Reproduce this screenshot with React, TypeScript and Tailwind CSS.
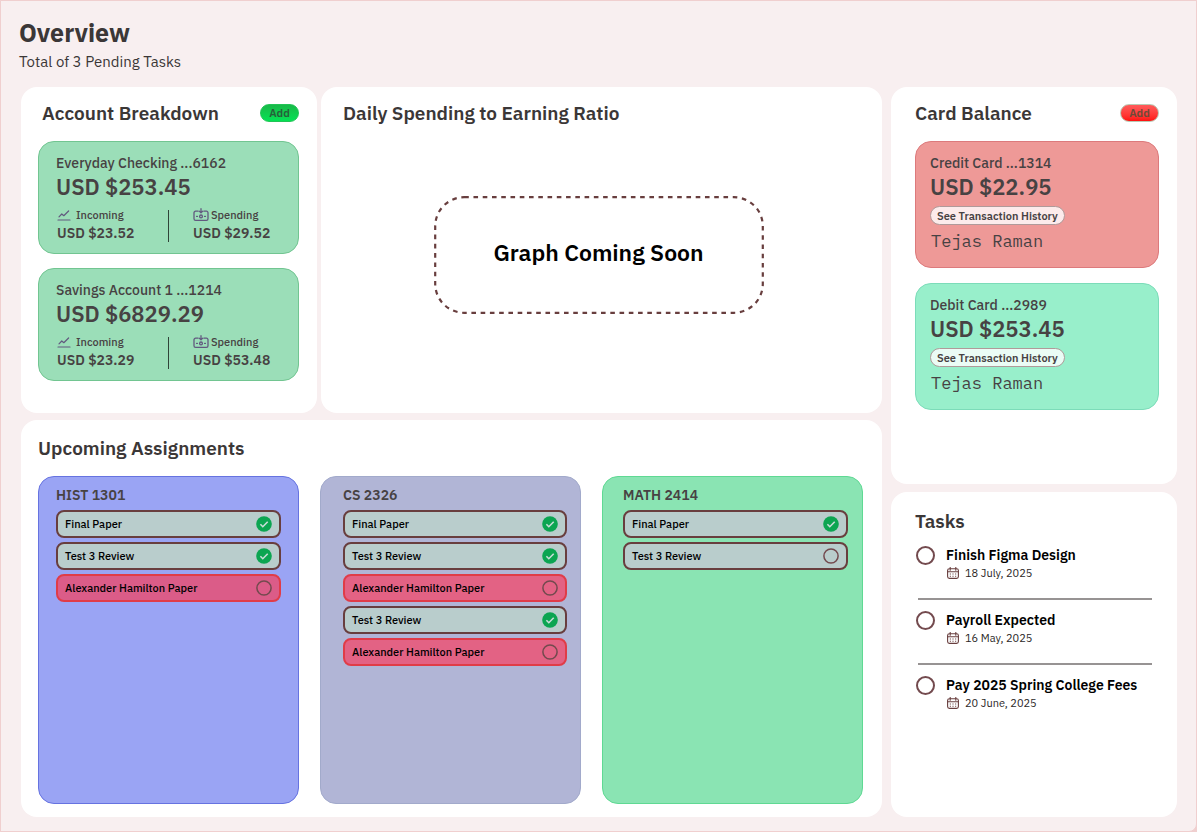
type Account = { name: string; amount: string; incoming: string; spending: string };
type Card = { id: string; name: string; amount: string; owner: string; style: string; pill: string };
type Assignment = { title: string; done?: boolean; late?: boolean };
type Course = { name: string; style: string; pad: string; lateStyle: string; items: Assignment[] };

const accounts: Account[] = [
  { name: "Everyday Checking ...6162", amount: "USD $253.45", incoming: "USD $23.52", spending: "USD $29.52" },
  { name: "Savings Account 1 ...1214", amount: "USD $6829.29", incoming: "USD $23.29", spending: "USD $53.48" },
];

const cards: Card[] = [
  {
    id: "credit",
    name: "Credit Card ...1314",
    amount: "USD $22.95",
    owner: "Tejas Raman",
    style: "border-[#dc7a7c] bg-[#ee9997]",
    pill: "bg-[#fcebeb]",
  },
  {
    id: "debit",
    name: "Debit Card ...2989",
    amount: "USD $253.45",
    owner: "Tejas Raman",
    style: "border-[#7cdcb9] bg-[#98efcb]",
    pill: "bg-[#ebfcf5]",
  },
];

const courses: Course[] = [
  {
    name: "HIST 1301",
    style: "border-[#6673e0] bg-[#9aa4f4]",
    pad: "pl-[17px] pr-[17px]",
    lateStyle: "border-[#e03c48] bg-[#db5c88]",
    items: [
      { title: "Final Paper", done: true },
      { title: "Test 3 Review", done: true },
      { title: "Alexander Hamilton Paper", late: true },
    ],
  },
  {
    name: "CS 2326",
    style: "border-[#a2aacb] bg-[#b1b5d6]",
    pad: "pl-[22px] pr-[13px]",
    lateStyle: "border-[#e03c48] bg-[#e36284]",
    items: [
      { title: "Final Paper", done: true },
      { title: "Test 3 Review", done: true },
      { title: "Alexander Hamilton Paper", late: true },
      { title: "Test 3 Review", done: true },
      { title: "Alexander Hamilton Paper", late: true },
    ],
  },
  {
    name: "MATH 2414",
    style: "border-[#5fd993] bg-[#8ae4b3]",
    pad: "pl-5 pr-3.5",
    lateStyle: "border-[#e03c48] bg-[#e36284]",
    items: [{ title: "Final Paper", done: true }, { title: "Test 3 Review" }],
  },
];

const tasks = [
  { title: "Finish Figma Design", date: "18 July, 2025" },
  { title: "Payroll Expected", date: "16 May, 2025" },
  { title: "Pay 2025 Spring College Fees", date: "20 June, 2025" },
];

function ChartIcon() {
  return (
    <svg viewBox="0 0 14 12" className="h-3 w-3.5 shrink-0" fill="none" stroke="#62597f" strokeWidth="1.2" aria-hidden="true">
      <path d="M1 11h12" strokeLinecap="round" strokeWidth="1.2" />
      <path d="M2 7.8 4.8 5l2 1.7L11.6 2" strokeLinecap="round" strokeLinejoin="round" />
    </svg>
  );
}

function CashIcon() {
  return (
    <svg viewBox="0 0 16 14" className="h-3.5 w-4 shrink-0" fill="none" stroke="#62597f" strokeWidth="1.3" aria-hidden="true">
      <path d="M5 3.2H2.6A1.6 1.6 0 0 0 1 4.8v6a1.6 1.6 0 0 0 1.6 1.6h10.8a1.6 1.6 0 0 0 1.6-1.6v-6a1.6 1.6 0 0 0-1.6-1.6H11" strokeLinecap="round" />
      <path d="M8 .7v4M6.2 3.1 8 4.8l1.8-1.7" strokeLinecap="round" strokeLinejoin="round" />
      <circle cx="8" cy="8.4" r="1.4" />
      <path d="M3.6 8.4h.8M11.6 8.4h.8" strokeLinecap="round" />
    </svg>
  );
}

function CalendarIcon() {
  return (
    <svg viewBox="0 0 12 12" className="size-3 shrink-0" fill="none" stroke="#683e3e" strokeWidth="1.1" aria-hidden="true">
      <rect x="0.6" y="1.8" width="10.8" height="9.6" rx="1.8" />
      <path d="M.8 4.7h10.4M3.2.4v2.8M8.8.4v2.8" strokeLinecap="round" />
      <path d="M2.8 7h1.1M5.45 7h1.1M8.1 7h1.1M2.8 9.2h1.1M5.45 9.2h1.1M8.1 9.2h1.1" />
    </svg>
  );
}

function AddButton({ label, className }: { label: string; className: string }) {
  return (
    <button
      type="button"
      aria-label={label}
      className={`h-[18px] w-[39px] rounded-full border text-center text-[11px] leading-4 font-semibold ${className}`}
    >
      Add
    </button>
  );
}

function Heading({ children }: { children: string }) {
  return <h2 className="text-[19px] leading-7 font-semibold text-[#3b3737]">{children}</h2>;
}

function AccountCard({ account }: { account: Account }) {
  return (
    <article className="rounded-2xl border border-[#72c591] bg-[#9bdeb8] px-[17px] pt-[11px] pb-[11px] text-[#474243]">
      <h3 className="text-[14px] leading-5 font-medium">{account.name}</h3>
      <p className="text-[22px] leading-7 font-semibold">{account.amount}</p>
      <div className="mt-[5px] grid grid-cols-[1fr_1px_1fr]">
        <div className="pl-px">
          <p className="flex h-[18px] items-center gap-[5px] text-[11px] font-medium">
            <ChartIcon />
            Incoming
          </p>
          <p className="text-[14px] leading-[18px] font-semibold">{account.incoming}</p>
        </div>
        <div className="h-8 self-end bg-[#2f4438]" />
        <div className="pl-6">
          <p className="flex h-[18px] items-center gap-0.5 text-[11px] font-medium">
            <CashIcon />
            Spending
          </p>
          <p className="text-[14px] leading-[18px] font-semibold">{account.spending}</p>
        </div>
      </div>
    </article>
  );
}

function BalanceCard({ card }: { card: Card }) {
  return (
    <article className={`rounded-2xl border px-3.5 pt-[11px] pb-3.5 text-[#474243] ${card.style}`}>
      <h3 className="text-[14px] leading-5 font-medium">{card.name}</h3>
      <p className="text-[22px] leading-7 font-semibold">{card.amount}</p>
      <button
        type="button"
        className={`mt-[5px] block h-[19px] rounded-full border border-[#b09a9a] px-1.5 text-[11px] leading-4 font-semibold ${card.pill}`}
      >
        See Transaction History
      </button>
      <p className="mt-1 pl-px font-['IBM_Plex_Mono','Liberation_Mono',monospace] text-[17px] leading-6">{card.owner}</p>
    </article>
  );
}

function AssignmentRow({ item, lateStyle }: { item: Assignment; lateStyle: string }) {
  return (
    <li>
      <label
        className={`flex h-7 items-center justify-between rounded-lg border-2 pr-[7px] pl-[7px] text-[11px] font-medium text-black ${
          item.late ? lateStyle : "border-[#683e3e] bg-[#b9cdcc]"
        }`}
      >
        {item.title}
        <span className="relative size-4">
          <input type="checkbox" defaultChecked={item.done} className="peer sr-only" />
          <svg viewBox="0 0 16 16" className="size-4 peer-checked:hidden" fill="none" stroke="#734a4e" strokeWidth="1.5" aria-hidden="true">
            <circle cx="8" cy="8" r="7.1" />
          </svg>
          <svg viewBox="0 0 16 16" className="hidden size-4 peer-checked:block" fill="none" aria-hidden="true">
            <circle cx="8" cy="8" r="7.8" fill="#0ca551" />
            <path d="m4.4 8.3 2.4 2.4 4.9-4.9" stroke="#c9ddd8" strokeWidth="1.6" />
          </svg>
        </span>
      </label>
    </li>
  );
}

export default function App() {
  return (
    <div className="min-h-screen bg-[#f0cfcf] font-['IBM_Plex_Sans',Roboto,sans-serif]">
      <main className="flex min-h-screen flex-col rounded-br-lg border border-[#f0cfcf] bg-[#f8eff0] pb-3.5">
        <header className="px-[18px] pt-3.5 pb-3.5 text-[#3b3737]">
          <h1 className="text-[25px] leading-9 font-bold">Overview</h1>
          <p className="text-[15px] leading-[22px]">Total of 3 Pending Tasks</p>
        </header>

        <div className="grid flex-1 grid-cols-[1fr_286px] gap-[9px] pr-[19px] pl-5">
          <div className="flex flex-col gap-[7px]">
            <div className="grid grid-cols-[296px_1fr] gap-1">
              <section className="rounded-2xl bg-white pt-3 pr-[18px] pb-8 pl-[17px]">
                <div className="flex items-center justify-between pl-1">
                  <Heading>Account Breakdown</Heading>
                  <AddButton
                    label="Add account"
                    className="border-[#22c456] bg-linear-to-b from-[#17b948] to-[#03e254] text-[#25603a]"
                  />
                </div>
                <div className="mt-3.5 flex flex-col gap-3.5">
                  {accounts.map((account) => (
                    <AccountCard key={account.name} account={account} />
                  ))}
                </div>
              </section>

              <section className="flex flex-col rounded-2xl bg-white px-[22px] pt-3">
                <Heading>Daily Spending to Earning Ratio</Heading>
                <div className="flex flex-1 items-center justify-center pr-1.5 pb-[30px]">
                  <div className="relative flex h-[118px] w-[330px] items-center justify-center">
                    <svg className="absolute inset-0 size-full" viewBox="0 0 330 118" fill="none" aria-hidden="true">
                      <rect x="1.2" y="1.2" width="327.6" height="115.6" rx="29" stroke="#683e3e" strokeWidth="2.2" strokeDasharray="4.6 4.66" />
                    </svg>
                    <p className="pb-1.5 text-[23px] leading-8 font-semibold text-black">Graph Coming Soon</p>
                  </div>
                </div>
              </section>
            </div>

            <section className="flex flex-1 flex-col rounded-2xl bg-white pt-3.5 pr-[19px] pb-[13px] pl-[17px]">
              <Heading>Upcoming Assignments</Heading>
              <div className="mt-3.5 grid flex-1 grid-cols-3 gap-[21px]">
                {courses.map((course) => (
                  <article key={course.name} className={`rounded-2xl border pt-2 pb-4 ${course.style} ${course.pad}`}>
                    <h3 className="text-[14px] leading-5 font-semibold text-[#474243]">{course.name}</h3>
                    <ul className="mt-[5px] flex flex-col gap-1">
                      {course.items.map((item, i) => (
                        <AssignmentRow key={i} item={item} lateStyle={course.lateStyle} />
                      ))}
                    </ul>
                  </article>
                ))}
              </div>
            </section>
          </div>

          <div className="flex flex-col gap-2">
            <section className="rounded-2xl bg-white pt-3 pr-[18px] pb-[74px] pl-6">
              <div className="flex items-center justify-between">
                <Heading>Card Balance</Heading>
                <AddButton
                  label="Add card"
                  className="border-[#b9c9b4] bg-linear-to-b from-[#ff5a5a] to-[#ff0d0d] text-[#6d4a38]"
                />
              </div>
              <div className="mt-3.5 flex flex-col gap-[15px]">
                {cards.map((card) => (
                  <BalanceCard key={card.id} card={card} />
                ))}
              </div>
            </section>

            <section className="flex-1 rounded-2xl bg-white pt-[15px] pr-[25px] pb-6 pl-6">
              <Heading>Tasks</Heading>
              <ul className="mt-2.5">
                {tasks.map((task, i) => (
                  <li key={task.title}>
                    {i > 0 && <hr className="mt-[17px] mb-2.5 ml-[3px] border-t-2 border-[#979393]" />}
                    <label className="flex gap-[11px]">
                      <input
                        type="checkbox"
                        className="mt-px ml-px size-[19px] shrink-0 appearance-none rounded-full border-2 border-[#734a4e] checked:bg-[#0ca551]"
                      />
                      <span>
                        <span className="block text-[14px] leading-5 font-semibold text-black">{task.title}</span>
                        <span className="flex h-4 items-center gap-1.5 pl-px text-[11px] text-[#2b2727]">
                          <CalendarIcon />
                          {task.date}
                        </span>
                      </span>
                    </label>
                  </li>
                ))}
              </ul>
            </section>
          </div>
        </div>
      </main>
    </div>
  );
}
